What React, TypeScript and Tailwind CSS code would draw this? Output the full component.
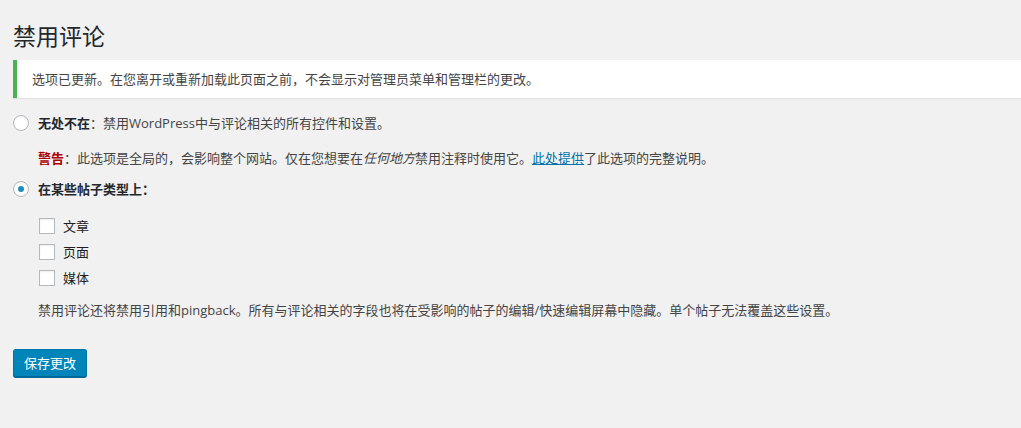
import React from "react";

const font = { fontFamily: '"Open Sans", "Noto Sans CJK SC", sans-serif' };

function Radio({ checked }: { checked?: boolean }) {
  return (
    <span className="flex h-4 w-4 shrink-0 items-center justify-center rounded-full border border-[#b4b9be] bg-white shadow-[inset_0_1px_2px_rgba(0,0,0,0.07)]">
      {checked && <span className="h-[6px] w-[6px] rounded-full bg-[#1e8cbe]" />}
    </span>
  );
}

function Check({ label }: { label: string }) {
  return (
    <label className="flex h-[26px] items-center">
      <span className="h-4 w-4 shrink-0 border border-[#b4b9be] bg-white shadow-[inset_0_1px_2px_rgba(0,0,0,0.07)]" />
      <span className="ml-2 text-[13px] text-[#1e1e1e]">{label}</span>
    </label>
  );
}

export default function App() {
  return (
    <div className="min-h-[428px] w-full bg-[#f1f1f1] pl-[13px] pt-[22px] text-[13px] leading-[20px] text-[#444]" style={font}>
      <h1 className="text-[23px] font-normal leading-[29px] text-[#23282d]">禁用评论</h1>

      <div className="mt-[9px] border-l-4 border-[#46b450] bg-white py-px pl-[15px] shadow-[0_1px_1px_rgba(0,0,0,0.08)]">
        <p className="my-[6px] py-[2px] leading-[20px]">
          选项已更新。在您离开或重新加载此页面之前，不会显示对管理员菜单和管理栏的更改。
        </p>
      </div>

      <div className="mt-[15px] flex h-5 items-center">
        <Radio />
        <span className="ml-[9px]">
          <strong className="font-bold text-[#23282d]">无处不在</strong>：禁用WordPress中与评论相关的所有控件和设置。
        </span>
      </div>

      <p className="mt-[15px] h-5 pl-[25px]">
        <strong className="font-bold text-[#a00]">警告</strong>：此选项是全局的，会影响整个网站。仅在您想要在<em className="italic">任何地方</em>禁用注释时使用它。
        <a className="text-[#0073aa] underline">此处提供</a>了此选项的完整说明。
      </p>

      <div className="mt-[11px] flex h-5 items-center">
        <Radio checked />
        <span className="ml-[9px] font-bold text-[#23282d]">在某些帖子类型上：</span>
      </div>

      <div className="mt-[14px] flex flex-col pl-[26px]">
        <Check label="文章" />
        <Check label="页面" />
        <Check label="媒体" />
      </div>

      <p className="mt-[9px] h-5 pl-[25px]">
        禁用评论还将禁用引用和pingback。所有与评论相关的字段也将在受影响的帖子的编辑/快速编辑屏幕中隐藏。单个帖子无法覆盖这些设置。
      </p>

      <button className="mt-[29px] h-7 rounded-[3px] border border-[#0073aa] border-b-[#006799] bg-[#0085ba] px-[10px] text-[13px] leading-[26px] text-white shadow-[0_1px_0_#006799]">
        保存更改
      </button>
    </div>
  );
}
